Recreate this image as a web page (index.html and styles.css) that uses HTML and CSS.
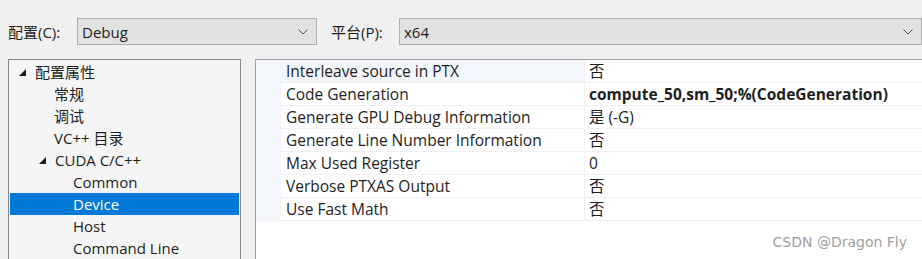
FILE: index.html
```html
<!DOCTYPE html>
<html lang="zh-CN">
<head>
<meta charset="UTF-8">
<title>属性页</title>
<link rel="stylesheet" href="styles.css">
</head>
<body>

<div class="toolbar">
    <span class="field-label">配置(C):</span>
    <div class="combo combo-config">
        <span>Debug</span>
        <svg class="chevron" width="10" height="6" viewBox="0 0 10 6"><polyline points="0.5,0.5 5,5 9.5,0.5" fill="none" stroke="#555" stroke-width="1"/></svg>
    </div>
    <span class="field-label field-label-2">平台(P):</span>
    <div class="combo combo-platform">
        <span>x64</span>
        <svg class="chevron" width="10" height="6" viewBox="0 0 10 6"><polyline points="0.5,0.5 5,5 9.5,0.5" fill="none" stroke="#555" stroke-width="1"/></svg>
    </div>
</div>

<div class="main">
    <div class="tree">
        <div class="node lvl0"><svg class="arrow" width="7" height="7" viewBox="0 0 7 7"><polygon points="7,0 7,7 0,7" fill="#1e1e1e"/></svg>配置属性</div>
        <div class="node lvl1">常规</div>
        <div class="node lvl1">调试</div>
        <div class="node lvl1">VC++ 目录</div>
        <div class="node lvl1 open"><svg class="arrow" width="7" height="7" viewBox="0 0 7 7"><polygon points="7,0 7,7 0,7" fill="#1e1e1e"/></svg>CUDA C/C++</div>
        <div class="node lvl2">Common</div>
        <div class="node lvl2 selected">Device</div>
        <div class="node lvl2">Host</div>
        <div class="node lvl2">Command Line</div>
    </div>

    <div class="grid">
        <div class="gutter"></div>
        <div class="rows">
            <div class="row current"><div class="name">Interleave source in PTX</div><div class="value">否</div></div>
            <div class="row"><div class="name">Code Generation</div><div class="value bold">compute_50,sm_50;%(CodeGeneration)</div></div>
            <div class="row"><div class="name">Generate GPU Debug Information</div><div class="value">是 (-G)</div></div>
            <div class="row"><div class="name">Generate Line Number Information</div><div class="value">否</div></div>
            <div class="row"><div class="name">Max Used Register</div><div class="value">0</div></div>
            <div class="row"><div class="name">Verbose PTXAS Output</div><div class="value">否</div></div>
            <div class="row"><div class="name">Use Fast Math</div><div class="value">否</div></div>
        </div>
    </div>
</div>

<div class="watermark">CSDN @Dragon Fly</div>

</body>
</html>
```

FILE: styles.css
```css
body {
    font-family: "Open Sans", "Noto Sans CJK SC", sans-serif;
    font-size: 15px;
    color: #1e1e1e;
    background-color: #f0f0f0;
    margin: 0;
    padding: 0;
    height: 259px;
    overflow: hidden;
    position: relative;
}
.toolbar {
    display: flex;
    align-items: center;
    padding: 18px 0 0 8px;
    height: 27px;
}
.field-label {
    width: 69px;
}
.field-label-2 {
    margin-left: 14px;
    width: 68px;
}
.combo {
    box-sizing: border-box;
    height: 27px;
    border: 1px solid #adadad;
    background-color: #e1e1e1;
    display: flex;
    align-items: center;
    justify-content: space-between;
    padding: 0 8px 0 4px;
}
.combo-config {
    width: 240px;
}
.combo-platform {
    width: 523px;
}
.main {
    display: flex;
    margin-top: 14px;
    padding-left: 8px;
}
.tree {
    box-sizing: border-box;
    width: 233px;
    height: 210px;
    border: 1px solid #828790;
    border-bottom: none;
    background-color: #f5f5f5;
    padding: 1px 1px 0 1px;
}
.node {
    height: 22px;
    line-height: 22px;
    display: flex;
    align-items: center;
    white-space: nowrap;
}
.arrow {
    margin-right: 9px;
}
.lvl0 {
    padding-left: 9px;
}
.lvl1 {
    padding-left: 44px;
}
.lvl1.open {
    padding-left: 29px;
}
.lvl2 {
    padding-left: 63px;
}
.selected {
    background-color: #0078d7;
    color: #fff;
}
.grid {
    box-sizing: border-box;
    margin-left: 14px;
    flex: 1;
    height: 210px;
    border-top: 1px solid #a0a0a0;
    border-left: 1px solid #a0a0a0;
    background-color: #fff;
    display: flex;
    align-items: flex-start;
}
.gutter {
    width: 25px;
    height: 161px;
    background-color: #f3f6fa;
}
.rows {
    flex: 1;
    font-size: 15.5px;
}
.row {
    display: flex;
    height: 22px;
    line-height: 23px;
    border-bottom: 1px solid #f0f0f0;
}
.name {
    box-sizing: border-box;
    width: 304px;
    padding-left: 5px;
    border-right: 1px solid #f0f0f0;
}
.current .name {
    background-color: #f3f6fa;
}
.value {
    padding-left: 4px;
}
.bold {
    font-weight: bold;
}
.watermark {
    position: absolute;
    right: 15px;
    bottom: 9px;
    font-family: "DejaVu Sans", sans-serif;
    font-size: 14px;
    color: #a0a0a0;
}
```
